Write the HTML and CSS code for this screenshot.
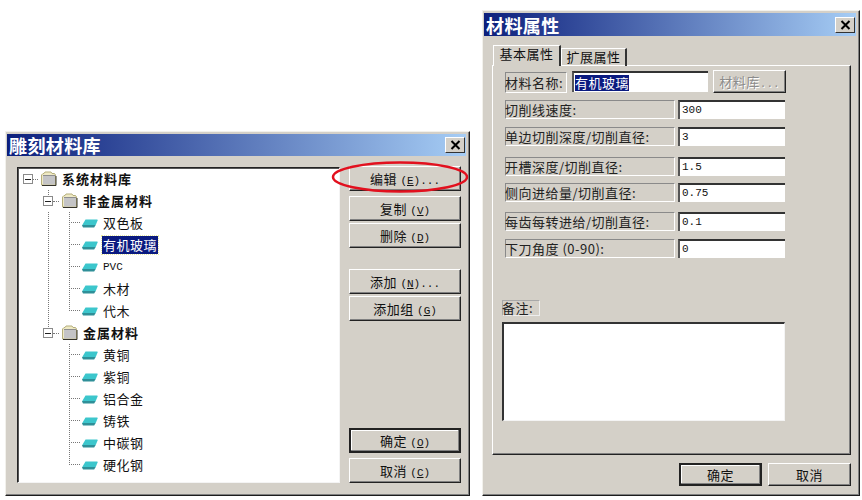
FILE: index.html
```html
<!doctype html>
<html lang="zh-CN">
<head>
    <meta charset="UTF-8">
    <title>雕刻材料库</title>
    <link rel="stylesheet" href="styles.css">
</head>
<body>
<svg width="0" height="0" class="defs">
    <symbol id="folder" viewBox="0 0 17 15">
        <path d="M1.5 14V4L3 2.500h1L5 1h6l1 1.500h2.500L15.500 4v10z" fill="#efeac4" stroke="#b5ae7c"/>
        <rect x="3" y="4.500" width="12" height="9" fill="#c4c4c6"/>
        <path d="M3 4.500h12" stroke="#8e8e90"/>
        <path d="M2 14.500h14M16 5v9.500" stroke="#33322a"/>
    </symbol>
    <symbol id="leaf" viewBox="0 0 16 9">
        <path d="M3.500 .5h11.500q1 0 .6 1L13.500 6.500H0z" fill="#3cc6cc"/>
        <path d="M0 6h13.500l-1 2q-.3.6-1 .6H2q-1 0-1.300-.6z" fill="#2f8f98"/>
    </symbol>
    <symbol id="close" viewBox="0 0 10 10">
        <path d="M1 1l8 8M9 1L1 9" stroke="#000" stroke-width="2" fill="none"/>
    </symbol>
</svg>

<div class="window lib">
    <div class="title">
        <span>雕刻材料库</span>
        <span class="close"><svg width="11" height="10"><use href="#close"/></svg></span>
    </div>
    <div class="lib-body">
        <div class="tree">
            <div class="row">
                <i class="cell exp"><b class="box"></b><i class="dash"></i></i>
                <svg class="folder"><use href="#folder"/></svg>
                <span class="name group">系统材料库</span>
            </div>
            <div class="row">
                <i class="cell"></i>
                <i class="cell exp up"><b class="box"></b><i class="dash"></i></i>
                <svg class="folder"><use href="#folder"/></svg>
                <span class="name group">非金属材料</span>
            </div>
            <div class="row">
                <i class="cell"></i><i class="cell guide"></i><i class="cell guide"><i class="stub"></i></i>
                <svg class="leaf"><use href="#leaf"/></svg>
                <span class="name">双色板</span>
            </div>
            <div class="row">
                <i class="cell"></i><i class="cell guide"></i><i class="cell guide"><i class="stub"></i></i>
                <svg class="leaf"><use href="#leaf"/></svg>
                <span class="name selected">有机玻璃</span>
            </div>
            <div class="row">
                <i class="cell"></i><i class="cell guide"></i><i class="cell guide"><i class="stub"></i></i>
                <svg class="leaf"><use href="#leaf"/></svg>
                <span class="name ascii">PVC</span>
            </div>
            <div class="row">
                <i class="cell"></i><i class="cell guide"></i><i class="cell guide"><i class="stub"></i></i>
                <svg class="leaf"><use href="#leaf"/></svg>
                <span class="name">木材</span>
            </div>
            <div class="row">
                <i class="cell"></i><i class="cell guide"></i><i class="cell"><i class="stub last"></i></i>
                <svg class="leaf"><use href="#leaf"/></svg>
                <span class="name">代木</span>
            </div>
            <div class="row">
                <i class="cell"></i>
                <i class="cell exp up"><b class="box"></b><i class="dash"></i></i>
                <svg class="folder"><use href="#folder"/></svg>
                <span class="name group">金属材料</span>
            </div>
            <div class="row">
                <i class="cell"></i><i class="cell"></i><i class="cell guide"><i class="stub"></i></i>
                <svg class="leaf"><use href="#leaf"/></svg>
                <span class="name">黄铜</span>
            </div>
            <div class="row">
                <i class="cell"></i><i class="cell"></i><i class="cell guide"><i class="stub"></i></i>
                <svg class="leaf"><use href="#leaf"/></svg>
                <span class="name">紫铜</span>
            </div>
            <div class="row">
                <i class="cell"></i><i class="cell"></i><i class="cell guide"><i class="stub"></i></i>
                <svg class="leaf"><use href="#leaf"/></svg>
                <span class="name">铝合金</span>
            </div>
            <div class="row">
                <i class="cell"></i><i class="cell"></i><i class="cell guide"><i class="stub"></i></i>
                <svg class="leaf"><use href="#leaf"/></svg>
                <span class="name">铸铁</span>
            </div>
            <div class="row">
                <i class="cell"></i><i class="cell"></i><i class="cell guide"><i class="stub"></i></i>
                <svg class="leaf"><use href="#leaf"/></svg>
                <span class="name">中碳钢</span>
            </div>
            <div class="row">
                <i class="cell"></i><i class="cell"></i><i class="cell"><i class="stub last"></i></i>
                <svg class="leaf"><use href="#leaf"/></svg>
                <span class="name">硬化钢</span>
            </div>
        </div>
        <div class="actions">
            <button class="btn">编辑 <span class="ascii">(<u>E</u>)...</span></button>
            <button class="btn next-group">复制 <span class="ascii">(<u>V</u>)</span></button>
            <button class="btn">删除 <span class="ascii">(<u>D</u>)</span></button>
            <button class="btn far-group">添加 <span class="ascii">(<u>N</u>)...</span></button>
            <button class="btn">添加组 <span class="ascii">(<u>G</u>)</span></button>
            <button class="btn default push">确定 <span class="ascii">(<u>O</u>)</span></button>
            <button class="btn next-group">取消 <span class="ascii">(<u>C</u>)</span></button>
        </div>
    </div>
</div>

<!-- red marker drawn over the first button -->
<svg class="marker" width="140" height="34">
    <ellipse cx="70" cy="17" rx="67" ry="14.500" fill="none" stroke="#e2101e" stroke-width="2.500"/>
</svg>

<div class="window props">
    <div class="title">
        <span>材料属性</span>
        <span class="close"><svg width="11" height="10"><use href="#close"/></svg></span>
    </div>
    <div class="tabs">
        <span class="tab active">基本属性</span>
        <span class="tab">扩展属性</span>
    </div>
    <div class="panel">
        <div class="name-row">
            <span class="cap short">材料名称:</span>
            <div class="field wide"><span class="picked">有机玻璃</span></div>
            <button class="btn off">材料库<span class="ascii">...</span></button>
        </div>
        <div class="prop-list">
            <div class="prop"><span class="cap">切削线速度:</span><div class="field ascii">300</div></div>
            <div class="prop"><span class="cap">单边切削深度/切削直径:</span><div class="field ascii">3</div></div>
            <div class="prop"><span class="cap">开槽深度/切削直径:</span><div class="field ascii">1.5</div></div>
            <div class="prop"><span class="cap">侧向进给量/切削直径:</span><div class="field ascii">0.75</div></div>
            <div class="prop"><span class="cap">每齿每转进给/切削直径:</span><div class="field ascii">0.1</div></div>
            <div class="prop"><span class="cap">下刀角度 (0-90):</span><div class="field ascii">0</div></div>
        </div>
        <span class="cap note">备注:</span>
        <div class="memo"></div>
    </div>
    <div class="footer">
        <button class="btn default">确定</button>
        <button class="btn">取消</button>
    </div>
</div>
</body>
</html>
```

FILE: styles.css
```css
* {
    box-sizing: border-box;
}

body {
    margin: 0;
    height: 500px;
    background: #fff;
    color: #111;
    font-family: "Noto Sans CJK SC", sans-serif;
    font-size: 13px;
    letter-spacing: .5px;
    overflow: hidden;
}

.defs {
    position: absolute;
}

.ascii {
    font-family: "Liberation Mono", monospace;
    font-size: 11px;
    letter-spacing: 0;
}

/* windows sit on a free desktop */
.window {
    position: absolute;
    background: #d4d0c8;
    border: 1px solid;
    border-color: #f2f1ec #1c1c1c #1c1c1c #f2f1ec;
    box-shadow: inset -1px -1px #808080;
    padding: 2px 3px 0 1px;
}

.lib {
    left: 5px;
    top: 131px;
    width: 465px;
    height: 365px;
}

.props {
    left: 482px;
    top: 10px;
    width: 378px;
    height: 486px;
}

.title {
    display: flex;
    align-items: center;
    justify-content: space-between;
    height: 22px;
    padding: 0 1px 0 2px;
    background: linear-gradient(90deg, #0c1f7c, #a6cdf5);
    color: #fff;
    font-size: 18px;
    font-weight: 700;
    letter-spacing: .4px;
}

.props .title {
    height: 23px;
}

.close {
    display: flex;
    align-items: center;
    justify-content: center;
    width: 20px;
    height: 16px;
    background: #d4d0c8;
    border: 1px solid;
    border-color: #fff #333 #333 #fff;
}

/* left dialog */
.lib-body {
    display: flex;
    gap: 9px;
    padding: 11px 0 0 10px;
}

.tree {
    width: 323px;
    height: 316px;
    background: #fff;
    border: 1px solid;
    border-color: #222 #f4f4f4 #f4f4f4 #222;
    box-shadow: inset 1px 1px #555;
}

.row {
    display: flex;
    align-items: center;
    height: 22px;
}

.cell {
    display: flex;
    flex: none;
    align-items: flex-start;
    width: 21px;
    height: 22px;
}

.cell:first-child {
    width: 20px;
}

.guide {
    background: linear-gradient(#777 50%, transparent 0) 10px 0 / 1px 2px repeat-y;
}

.stub {
    width: 11px;
    height: 11px;
    margin-left: 10px;
    border-bottom: 1px dotted #777;
}

.stub.last {
    border-left: 1px dotted #777;
}

.exp {
    align-items: center;
    padding-left: 5px;
}

.exp.up {
    background:
        linear-gradient(#fff, #fff) 0 11px / 100% 11px no-repeat,
        linear-gradient(#777 50%, transparent 0) 10px 0 / 1px 2px repeat-y;
}

.box {
    width: 10px;
    height: 10px;
    flex: none;
    border: 1px solid #8a8a8a;
    background: linear-gradient(#222, #222) center / 6px 1px no-repeat #fff;
}

.dash {
    width: 6px;
    border-bottom: 1px dotted #777;
}

.folder {
    flex: none;
    width: 17px;
    height: 15px;
    margin: -1px 4px 0 2px;
}

.leaf {
    flex: none;
    width: 16px;
    height: 9px;
    margin: 1px 4px 0 2px;
}

.name {
    padding: 0 1px;
    line-height: 18px;
    white-space: nowrap;
}

.group {
    font-weight: 700;
    letter-spacing: 1px;
}

.selected {
    background: #0a1a80;
    color: #fff;
    outline: 1px dotted #e8e8a0;
}

.actions {
    display: flex;
    flex-direction: column;
    width: 112px;
    height: 319px;
    margin-top: -1px;
}

.btn {
    display: block;
    height: 25px;
    padding: 0;
    margin: 0 0 2px;
    background: #d4d0c8;
    color: #111;
    font: inherit;
    letter-spacing: inherit;
    border: 1px solid;
    border-color: #fff #222 #222 #fff;
    box-shadow: inset -1px -1px #808080;
}

.next-group {
    margin-top: 3px;
}

.far-group {
    margin-top: 19px;
}

.push {
    margin-top: auto;
}

.default {
    border: 2px solid;
    border-color: #222;
    box-shadow: inset -1px -1px #808080, inset 1px 1px #fff;
}

.marker {
    position: absolute;
    left: 330px;
    top: 160px;
}

/* right dialog */
.tabs {
    display: flex;
    align-items: flex-end;
    position: relative;
    height: 30px;
    margin: 0 0 -1px 9px;
}

.tab {
    width: 66px;
    height: 18px;
    line-height: 16px;
    text-align: center;
    border-top: 1px solid #fff;
    border-right: 2px solid #333;
    border-left: 1px solid #fff;
}

.tab.active {
    width: 68px;
    height: 21px;
    background: #d4d0c8;
}

.panel {
    width: 359px;
    height: 390px;
    margin-left: 8px;
    padding: 5px 0 0 12px;
    border: 1px solid;
    border-color: #fff #222 #222 #fff;
    box-shadow: inset -1px -1px #808080;
}

.name-row {
    display: flex;
    align-items: flex-start;
    height: 23px;
}

.cap {
    display: block;
    flex: none;
    width: 170px;
    height: 19px;
    line-height: 17px;
    text-indent: -1px;
    color: #222;
    white-space: nowrap;
    border: 1px solid;
    border-color: #8a8a8a #fff #fff #8a8a8a;
}

.cap.short {
    width: 62px;
    height: 21px;
    margin: 1px 5px 0 0;
    line-height: 19px;
}

.field {
    width: 107px;
    height: 19px;
    padding-left: 2px;
    background: #fff;
    line-height: 17px;
    border-top: 2px solid #333;
    border-left: 2px solid #555;
}

.field.wide {
    width: 136px;
    height: 21px;
    margin: 0 5px 0 0;
    padding-left: 1px;
    line-height: 19px;
}

.picked {
    display: inline-block;
    height: 16px;
    line-height: 15px;
    background: #0a1a80;
    color: #fff;
}

.btn.off {
    width: 73px;
    height: 23px;
    margin: -1px 0 0;
    color: #8c8c8c;
    text-shadow: 1px 1px #fff;
}

.prop-list {
    display: flex;
    flex-direction: column;
    margin-top: 6px;
}

.prop {
    display: flex;
    gap: 3px;
    margin-top: 8px;
}

.prop:first-child {
    margin-top: 0;
}

.prop:nth-child(3) {
    margin-top: 11px;
}

.prop:nth-child(4) {
    margin-top: 7px;
}

.prop:nth-child(5) {
    margin-top: 10px;
}

.cap.note {
    width: 38px;
    height: 16px;
    line-height: 14px;
    margin: 42px 0 6px -3px;
    border-color: #a8a8a8 #eee #eee #a8a8a8;
}

.memo {
    width: 283px;
    height: 99px;
    margin-left: -3px;
    background: #fff;
    border-top: 2px solid #333;
    border-left: 2px solid #333;
    border-right: 1px solid #f4f4f4;
    border-bottom: 1px solid #f4f4f4;
}

.footer {
    display: flex;
    justify-content: flex-end;
    gap: 6px;
    width: 367px;
    margin-top: 8px;
}

.footer .btn {
    width: 83px;
    height: 23px;
    margin: 0;
}
```
